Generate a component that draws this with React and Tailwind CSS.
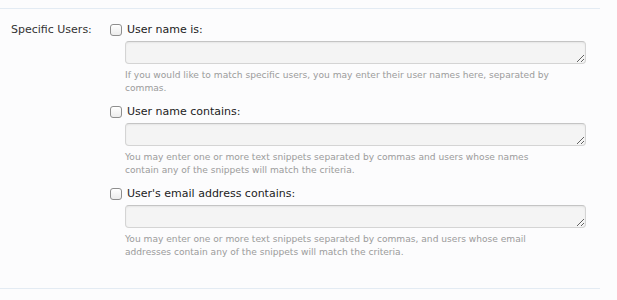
import React from "react";

const blocks = [
  {
    label: "User name is:",
    help: "If you would like to match specific users, you may enter their user names here, separated by commas.",
  },
  {
    label: "User name contains:",
    help: "You may enter one or more text snippets separated by commas and users whose names contain any of the snippets will match the criteria.",
  },
  {
    label: "User's email address contains:",
    help: "You may enter one or more text snippets separated by commas, and users whose email addresses contain any of the snippets will match the criteria.",
  },
];

function Block({ label, help, last }) {
  return (
    <div className={last ? "" : "pb-[9px]"}>
      <label className="flex items-center h-4 gap-[5px] text-[11px] leading-4 text-[#222]">
        <span className="w-3 h-3 rounded-[3px] border border-[#8e8e8e] bg-gradient-to-b from-white to-[#ececec] shadow-[inset_0_1px_0_#fff]" />
        <span>{label}</span>
      </label>
      <div className="pl-[15px]">
        <textarea
          className="block mt-[3px] w-[461px] h-[23px] rounded-[4px] border border-[#d4d4d4] border-t-[#c4c4c4] bg-[#f4f4f4] shadow-[inset_0_1px_2px_rgba(0,0,0,0.06)] resize-y outline-none"
          rows={1}
        />
        <p className="mt-[5px] w-[436px] text-[9.1px] leading-[13px] text-[#9b9b9b]">{help}</p>
      </div>
    </div>
  );
}

export default function App() {
  return (
    <div
      className="w-[617px] h-[300px] bg-[#fcfcfd] pt-2"
      style={{ fontFamily: '"DejaVu Sans", Verdana, sans-serif' }}
    >
      <div className="w-[600px] border-t border-b border-[#e3ebf3] pt-[13px] pb-[29px]">
        <div className="flex">
          <div className="w-[110px] pl-[11px] text-[11px] leading-4 text-[#333]">Specific Users:</div>
          <div className="flex flex-col">
            {blocks.map((b, i) => (
              <Block key={i} {...b} last={i === blocks.length - 1} />
            ))}
          </div>
        </div>
      </div>
    </div>
  );
}
